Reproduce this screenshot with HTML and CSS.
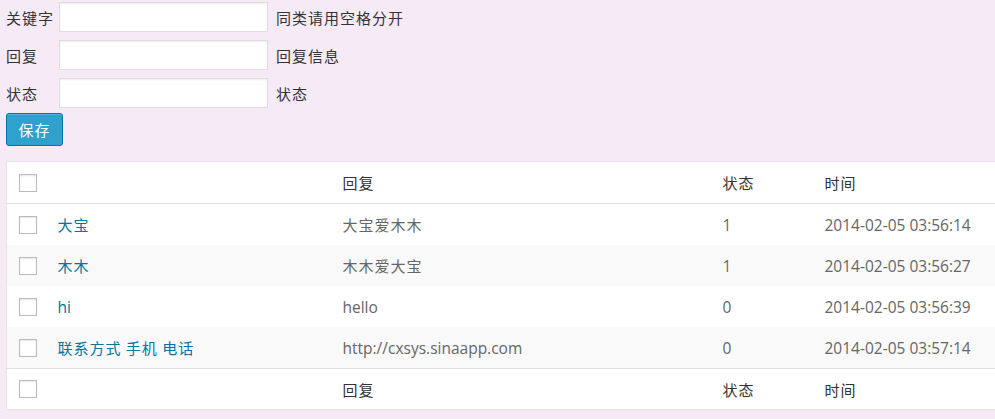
FILE: index.html
```html
<!DOCTYPE html>
<html lang="zh-CN">
<head>
    <meta charset="UTF-8">
    <title>关键字回复</title>
    <link rel="stylesheet" href="styles.css">
</head>
<body>
    <form class="reply-form">
        <div class="fields">
            <div class="field">
                <label class="zh" for="keyword">关键字</label>
                <input type="text" id="keyword">
                <span class="zh hint">同类请用空格分开</span>
            </div>
            <div class="field">
                <label class="zh" for="reply">回复</label>
                <input type="text" id="reply">
                <span class="zh hint">回复信息</span>
            </div>
            <div class="field">
                <label class="zh" for="status">状态</label>
                <input type="text" id="status">
                <span class="zh hint">状态</span>
            </div>
        </div>
        <button type="submit" class="save zh">保存</button>
    </form>

    <div class="list-wrap">
        <table class="list">
            <colgroup>
                <col class="c-check">
                <col class="c-key">
                <col class="c-reply">
                <col class="c-status">
                <col class="c-time">
            </colgroup>
            <thead>
                <tr>
                    <th class="check"><input type="checkbox"></th>
                    <th></th>
                    <th class="zh">回复</th>
                    <th class="zh">状态</th>
                    <th class="zh">时间</th>
                </tr>
            </thead>
            <tbody>
                <tr>
                    <td class="check"><input type="checkbox"></td>
                    <td><a class="zh" href="#">大宝</a></td>
                    <td class="zh">大宝爱木木</td>
                    <td>1</td>
                    <td>2014-02-05 03:56:14</td>
                </tr>
                <tr class="alt">
                    <td class="check"><input type="checkbox"></td>
                    <td><a class="zh" href="#">木木</a></td>
                    <td class="zh">木木爱大宝</td>
                    <td>1</td>
                    <td>2014-02-05 03:56:27</td>
                </tr>
                <tr>
                    <td class="check"><input type="checkbox"></td>
                    <td><a href="#">hi</a></td>
                    <td>hello</td>
                    <td>0</td>
                    <td>2014-02-05 03:56:39</td>
                </tr>
                <tr class="alt">
                    <td class="check"><input type="checkbox"></td>
                    <td><a class="zh" href="#">联系方式 手机 电话</a></td>
                    <td>http://cxsys.sinaapp.com</td>
                    <td>0</td>
                    <td>2014-02-05 03:57:14</td>
                </tr>
            </tbody>
            <tfoot>
                <tr>
                    <th class="check"><input type="checkbox"></th>
                    <th></th>
                    <th class="zh">回复</th>
                    <th class="zh">状态</th>
                    <th class="zh">时间</th>
                </tr>
            </tfoot>
        </table>
    </div>
</body>
</html>
```

FILE: styles.css
```css
html, body { margin: 0; padding: 0; }
body { background: #f6eaf6; font-family: "Open Sans", "Noto Sans CJK SC", sans-serif; font-size: 15.5px; color: #444; }
.zh { font-family: "Noto Sans CJK SC", "Open Sans", sans-serif; font-size: 15px; letter-spacing: 1px; }

.reply-form { padding: 2px 0 0 6px; }
.fields { display: flex; flex-direction: column; gap: 8px; }
.field { display: flex; align-items: center; height: 30px; }
.field label { width: 53px; color: #333; }
.field input { width: 209px; height: 30px; box-sizing: border-box; border: 1px solid #ddd; background: #fff; box-shadow: inset 0 1px 2px rgba(0,0,0,.07); margin: 0; }
.hint { margin-left: 8px; color: #333; }
.save { margin-top: 5px; width: 57px; height: 33px; padding: 0; background: #2ea2cc; border: 1px solid #0074a2; border-radius: 3px; color: #fff; box-shadow: inset 0 1px 0 rgba(120,200,230,.5); cursor: pointer; }

.list-wrap { margin: 15px 0 0 6px; overflow: hidden; }
.list { width: 1000px; table-layout: fixed; border-collapse: collapse; background: #fff; border: 1px solid #e5e5e5; box-shadow: 0 1px 1px rgba(0,0,0,.04); }
.c-check { width: 41px; }
.c-key { width: 285px; }
.c-reply { width: 380px; }
.c-status { width: 102px; }
.list th, .list td { text-align: left; font-weight: normal; padding: 0 10px; vertical-align: middle; white-space: nowrap; }
.list th { color: #333; }
.list td { color: #666; height: 41px; }
.list thead th { height: 41px; border-bottom: 1px solid #e1e1e1; }
.list tfoot th { height: 40px; border-top: 1px solid #e1e1e1; }
.list tr.alt td { background: #f9f9f9; }
.list .check { padding: 0 0 0 12px; }
.list a { color: #0074a2; text-decoration: none; }
.list input[type=checkbox] { appearance: none; -webkit-appearance: none; display: block; width: 18px; height: 18px; margin: 0; border: 1px solid #bbb; background: #fff; box-shadow: inset 0 1px 2px rgba(0,0,0,.1); }
```
